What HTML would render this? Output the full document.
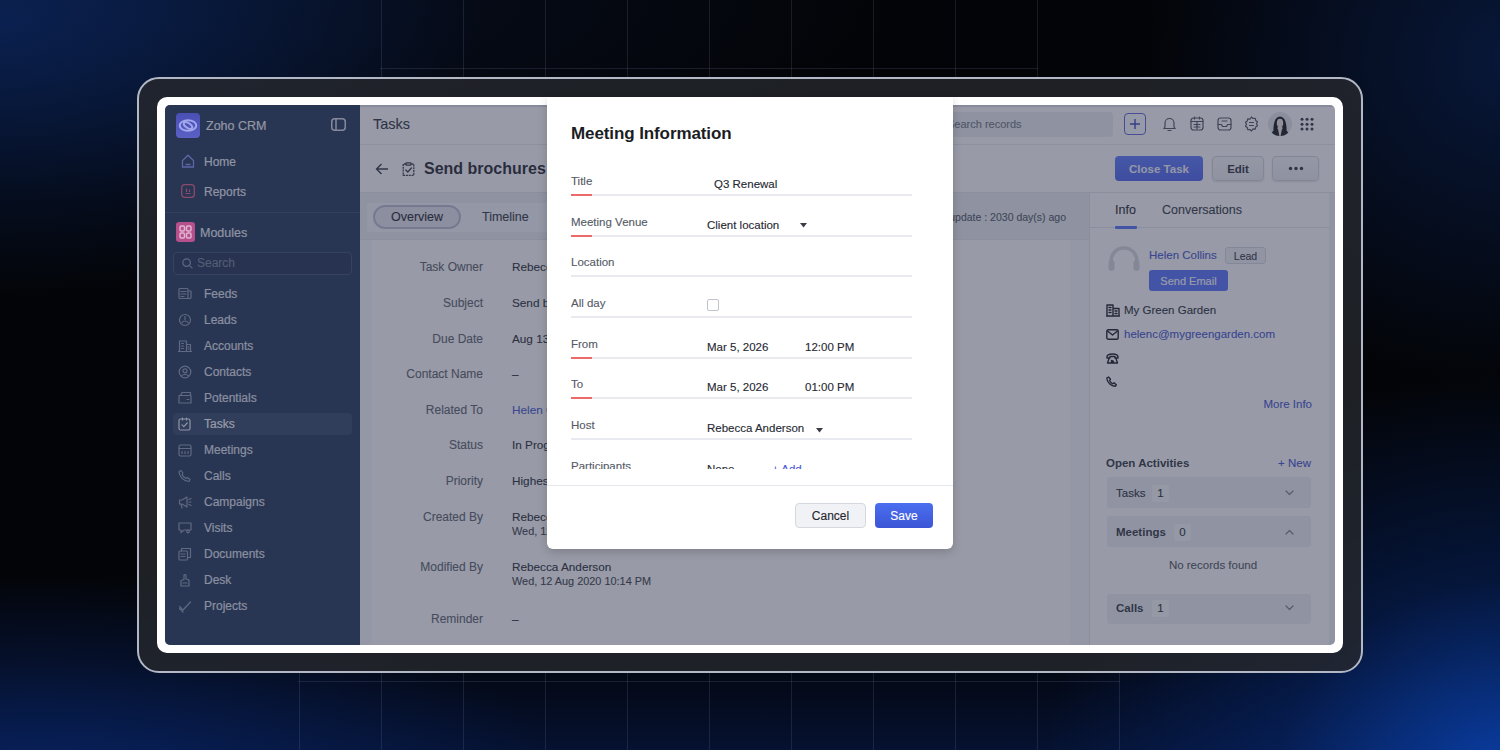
<!DOCTYPE html>
<html><head><meta charset="utf-8">
<style>
*{margin:0;padding:0;box-sizing:border-box}
html,body{width:1500px;height:750px;overflow:hidden}
body{position:relative;font-family:"Liberation Sans",sans-serif;background:#04060b;}
.a{position:absolute}
.t[style*="bold"]{-webkit-text-stroke:0}
.t{position:absolute;white-space:nowrap;line-height:16px;height:16px;-webkit-text-stroke:0.12px currentColor}
#bg{position:absolute;left:0;top:0;width:1500px;height:750px;
background:
radial-gradient(ellipse 470px 420px at 1510px 790px, rgba(10,66,175,0.95), rgba(8,48,135,0.4) 50%, rgba(0,0,0,0) 100%),
radial-gradient(ellipse 520px 220px at 40px 790px, rgba(10,45,125,0.6), rgba(0,0,0,0) 100%),
radial-gradient(ellipse 480px 280px at 0px 20px, rgba(12,42,105,0.65), rgba(0,0,0,0) 100%),
radial-gradient(ellipse 800px 200px at 100px 0px, rgba(12,30,70,0.45), rgba(0,0,0,0) 100%),
radial-gradient(ellipse 380px 330px at 1520px 60px, rgba(10,32,80,0.7), rgba(0,0,0,0) 100%),
linear-gradient(to top, rgba(6,22,62,0.75), rgba(4,12,35,0.3) 90px, rgba(0,0,0,0) 170px),
#030407;}
.vl{position:absolute;top:0;width:1px;height:750px;background:rgba(160,170,210,0.14)}
.hl{position:absolute;height:1px;background:rgba(160,170,210,0.14)}
#frame{position:absolute;left:137px;top:77px;width:1226px;height:596px;border:2px solid #b3b8c6;border-radius:22px;background:rgba(38,40,45,0.8)}
#white{position:absolute;left:157px;top:97px;width:1186px;height:556px;border-radius:10px;background:#fff}
#app{position:absolute;left:165px;top:105px;width:1170px;height:540px;border-radius:5px;overflow:hidden;background:#fff}
#overlay{position:absolute;left:165px;top:105px;width:1170px;height:540px;border-radius:5px;background:rgba(49,55,79,0.5)}
#modal{position:absolute;left:547px;top:97px;width:406px;height:452px;background:#fff;border-radius:0 0 6px 6px;overflow:hidden;box-shadow:0 3px 10px rgba(0,0,0,0.18)}
</style></head><body>
<div id="bg"></div>

<div class="vl" style="left:381px;top:0;height:80px"></div><div class="vl" style="left:463px;top:0;height:80px"></div><div class="vl" style="left:545px;top:0;height:80px"></div><div class="vl" style="left:627px;top:0;height:80px"></div><div class="vl" style="left:709px;top:0;height:80px"></div><div class="vl" style="left:791px;top:0;height:80px"></div><div class="vl" style="left:873px;top:0;height:80px"></div><div class="vl" style="left:955px;top:0;height:80px"></div><div class="vl" style="left:1037px;top:0;height:80px"></div><div class="vl" style="left:299px;top:670px;height:80px"></div><div class="vl" style="left:381px;top:670px;height:80px"></div><div class="vl" style="left:463px;top:670px;height:80px"></div><div class="vl" style="left:545px;top:670px;height:80px"></div><div class="vl" style="left:627px;top:670px;height:80px"></div><div class="vl" style="left:709px;top:670px;height:80px"></div><div class="vl" style="left:791px;top:670px;height:80px"></div><div class="vl" style="left:873px;top:670px;height:80px"></div><div class="vl" style="left:955px;top:670px;height:80px"></div><div class="vl" style="left:1037px;top:670px;height:80px"></div><div class="vl" style="left:1119px;top:670px;height:80px"></div>
<div class="hl" style="left:380px;width:658px;top:68px"></div>
<div class="hl" style="left:298px;width:822px;top:681px"></div>
<div id="frame"></div>
<div id="white"></div>
<div id="app">

<!-- SIDEBAR -->
<div class="a" style="left:0;top:0;width:195px;height:540px;background:#1f3356"></div>


<div class="t" style="left:41px;top:13px;font-size:12.5px;color:#f2f4fa">Zoho CRM</div>
<svg class="a" style="left:166px;top:13px" width="15" height="13" viewBox="0 0 15 13"><rect x="0.75" y="0.75" width="13.5" height="11.5" rx="3" fill="none" stroke="#d8dce8" stroke-width="1.5"/><line x1="5" y1="1" x2="5" y2="12" stroke="#d8dce8" stroke-width="1.5"/></svg>
<svg class="a" style="left:16px;top:49px" width="14" height="14" viewBox="0 0 14 14"><path d="M1.5 13V6.5L7 1.2l5.5 5.3V13z" fill="none" stroke="#8a93ff" stroke-width="1.3"/><path d="M4.5 10.5h5" stroke="#8a93ff" stroke-width="1.3"/></svg>
<div class="t" style="left:39px;top:49px;font-size:12px;color:#eef1f8">Home</div>
<svg class="a" style="left:16px;top:79px" width="14" height="14" viewBox="0 0 14 14"><rect x="0.7" y="0.7" width="12.6" height="12.6" rx="3" fill="none" stroke="#e75c8a" stroke-width="1.3"/><path d="M4.5 9.5h5M5.5 4.5v3.5M8.5 5.5v2.5" stroke="#e75c8a" stroke-width="1.2"/></svg>
<div class="t" style="left:39px;top:79px;font-size:12px;color:#eef1f8">Reports</div>
<div class="a" style="left:0;top:107px;width:195px;height:1px;background:#34476a"></div>


<div class="t" style="left:35px;top:120px;font-size:12.5px;color:#eef1f8">Modules</div>
<div class="a" style="left:8px;top:147px;width:179px;height:23px;border:1px solid #3a4d70;border-radius:4px;background:#1c2f50"></div>
<svg class="a" style="left:17px;top:153px" width="11" height="11" viewBox="0 0 11 11"><circle cx="4.6" cy="4.6" r="3.8" fill="none" stroke="#8996b4" stroke-width="1.2"/><path d="M7.4 7.4l3 3" stroke="#8996b4" stroke-width="1.2"/></svg>
<div class="t" style="left:32px;top:150px;font-size:12px;color:#74809c">Search</div>
<div class="a" style="left:8px;top:308px;width:179px;height:22px;border-radius:4px;background:#2e4468"></div>
<div class="t" style="left:39px;top:181px;font-size:12px;color:#e2e7f2">Feeds</div>
<div class="t" style="left:39px;top:207px;font-size:12px;color:#e2e7f2">Leads</div>
<div class="t" style="left:39px;top:233px;font-size:12px;color:#e2e7f2">Accounts</div>
<div class="t" style="left:39px;top:259px;font-size:12px;color:#e2e7f2">Contacts</div>
<div class="t" style="left:39px;top:285px;font-size:12px;color:#e2e7f2">Potentials</div>
<div class="t" style="left:39px;top:311px;font-size:12px;color:#ffffff">Tasks</div>
<div class="t" style="left:39px;top:337px;font-size:12px;color:#e2e7f2">Meetings</div>
<div class="t" style="left:39px;top:363px;font-size:12px;color:#e2e7f2">Calls</div>
<div class="t" style="left:39px;top:389px;font-size:12px;color:#e2e7f2">Campaigns</div>
<div class="t" style="left:39px;top:415px;font-size:12px;color:#e2e7f2">Visits</div>
<div class="t" style="left:39px;top:441px;font-size:12px;color:#e2e7f2">Documents</div>
<div class="t" style="left:39px;top:467px;font-size:12px;color:#e2e7f2">Desk</div>
<div class="t" style="left:39px;top:493px;font-size:12px;color:#e2e7f2">Projects</div>

<svg class="a" style="left:13px;top:182px" width="14" height="14" viewBox="0 0 14 14"><g fill="none" stroke="#8f9ab4" stroke-width="1.2" stroke-linecap="round" stroke-linejoin="round"><rect x="1" y="1.5" width="9" height="10" rx="1"/><path d="M10 4h3v6.5a1 1 0 0 1-1 1H2.5M3 4.5h5M3 7h5M3 9.5h3"/></g></svg>
<svg class="a" style="left:13px;top:208px" width="14" height="14" viewBox="0 0 14 14"><g fill="none" stroke="#8f9ab4" stroke-width="1.2" stroke-linecap="round" stroke-linejoin="round"><circle cx="7" cy="7" r="5.5"/><path d="M4 9.5c1-2 5-2 6 0M7 3.5v3"/></g></svg>
<svg class="a" style="left:13px;top:234px" width="14" height="14" viewBox="0 0 14 14"><g fill="none" stroke="#8f9ab4" stroke-width="1.2" stroke-linecap="round" stroke-linejoin="round"><path d="M1.5 12.5V2h7v10.5M8.5 5.5h4v7M0.5 12.5h13M3.5 4.5h2M3.5 7h2M3.5 9.5h2M10 8h1M10 10h1"/></g></svg>
<svg class="a" style="left:13px;top:260px" width="14" height="14" viewBox="0 0 14 14"><g fill="none" stroke="#8f9ab4" stroke-width="1.2" stroke-linecap="round" stroke-linejoin="round"><circle cx="7" cy="7" r="5.8"/><circle cx="7" cy="5.8" r="2"/><path d="M3.5 11c1-2 6-2 7 0"/></g></svg>
<svg class="a" style="left:13px;top:286px" width="14" height="14" viewBox="0 0 14 14"><g fill="none" stroke="#8f9ab4" stroke-width="1.2" stroke-linecap="round" stroke-linejoin="round"><path d="M1 4.5h12v7.5H1zM2.5 4.5L4 1.5h8.5v3M9 8.5h2"/></g></svg>
<svg class="a" style="left:13px;top:312px" width="14" height="14" viewBox="0 0 14 14"><g fill="none" stroke="#eef1f8" stroke-width="1.2" stroke-linecap="round" stroke-linejoin="round"><rect x="1" y="2" width="11" height="11" rx="1.5"/><path d="M4.5 1v2M8.5 1v2M4 7.8l1.8 1.8L9.2 6"/></g></svg>
<svg class="a" style="left:13px;top:338px" width="14" height="14" viewBox="0 0 14 14"><g fill="none" stroke="#8f9ab4" stroke-width="1.2" stroke-linecap="round" stroke-linejoin="round"><rect x="1" y="2" width="12" height="11" rx="1.5"/><path d="M1 5.5h12M4 8.5v2M7 8.5v2M10 8.5v2"/></g></svg>
<svg class="a" style="left:13px;top:364px" width="14" height="14" viewBox="0 0 14 14"><g fill="none" stroke="#8f9ab4" stroke-width="1.2" stroke-linecap="round" stroke-linejoin="round"><path d="M3 1.5l2 2.5-1 1.5c.8 1.8 2.2 3.2 4 4l1.5-1 2.5 2-1 2c-5 0-10-5-10-10z"/></g></svg>
<svg class="a" style="left:13px;top:390px" width="14" height="14" viewBox="0 0 14 14"><g fill="none" stroke="#8f9ab4" stroke-width="1.2" stroke-linecap="round" stroke-linejoin="round"><path d="M1.5 5v4h2.5l5 3V2L4 5zM3 9l1 4M11 4.5l2-1M11 9.5l2 1M11 7h2"/></g></svg>
<svg class="a" style="left:13px;top:416px" width="14" height="14" viewBox="0 0 14 14"><g fill="none" stroke="#8f9ab4" stroke-width="1.2" stroke-linecap="round" stroke-linejoin="round"><path d="M1 2h12v7H6l-3 2.5V9H1z"/><circle cx="10" cy="10.5" r="1.3"/></g></svg>
<svg class="a" style="left:13px;top:442px" width="14" height="14" viewBox="0 0 14 14"><g fill="none" stroke="#8f9ab4" stroke-width="1.2" stroke-linecap="round" stroke-linejoin="round"><rect x="1" y="4" width="8.5" height="9" rx="1"/><path d="M3.5 4V1.5h9v9H9.5M3 7h4M3 9.5h4"/></g></svg>
<svg class="a" style="left:13px;top:468px" width="14" height="14" viewBox="0 0 14 14"><g fill="none" stroke="#8f9ab4" stroke-width="1.2" stroke-linecap="round" stroke-linejoin="round"><path d="M3 13V7.5l3-1V2.5a1 1 0 0 1 2 0V6l3 1v6zM5 10h4"/></g></svg>
<svg class="a" style="left:13px;top:494px" width="14" height="14" viewBox="0 0 14 14"><g fill="none" stroke="#8f9ab4" stroke-width="1.2" stroke-linecap="round" stroke-linejoin="round"><path d="M1.5 7.5L5 11l7.5-8"/><path d="M1.5 9.5L5 13"/></g></svg>
<!-- MAIN -->
<div class="a" style="left:195px;top:0;width:975px;height:2px;background:#dcdde6"></div>
<div class="a" style="left:195px;top:39px;width:975px;height:1px;background:#e6e8ee"></div>
<div class="t" style="left:208px;top:11px;font-size:14.5px;color:#2b2f3a">Tasks</div>
<div class="a" style="left:770px;top:7px;width:178px;height:25px;border-radius:4px;background:#eceef3"></div>
<div class="t" style="left:782px;top:11px;font-size:11px;color:#6f7480">Search records</div>
<div class="a" style="left:959px;top:8px;width:22px;height:22px;border:1.5px solid #5a62d6;border-radius:4px;background:#fbfbff"></div>
<svg class="a" style="left:964px;top:13px" width="12" height="12" viewBox="0 0 12 12"><path d="M6 1v10M1 6h10" stroke="#3b44b8" stroke-width="1.4"/></svg>

<svg class="a" style="left:997px;top:11px" width="15" height="16" viewBox="0 0 15 16"><g fill="none" stroke="#4a4e5a" stroke-width="1.2" stroke-linecap="round" stroke-linejoin="round"><path d="M3 11V7a4.5 4.5 0 0 1 9 0v4l1.2 1.5H1.8z"/><path d="M6 14.5h3"/></g></svg>
<svg class="a" style="left:1025px;top:11px" width="14" height="15" viewBox="0 0 14 15"><g fill="none" stroke="#4a4e5a" stroke-width="1.2" stroke-linecap="round" stroke-linejoin="round"><rect x="1" y="2" width="12" height="12" rx="2.5"/><path d="M1 5.5h12M4.5 1v2M9.5 1v2M4 8.5h6M4 11h6M7 6v7"/></g></svg>
<svg class="a" style="left:1052px;top:12px" width="15" height="14" viewBox="0 0 15 14"><g fill="none" stroke="#4a4e5a" stroke-width="1.2" stroke-linecap="round" stroke-linejoin="round"><rect x="1" y="1" width="13" height="12" rx="2.5"/><path d="M1 7.5h3.5l1 2h4l1-2H14M5 4h5"/></g></svg>
<svg class="a" style="left:1079px;top:11px" width="15" height="16" viewBox="0 0 15 16"><g fill="none" stroke="#4a4e5a" stroke-width="1.2" stroke-linecap="round" stroke-linejoin="round"><path d="M7.5 1l1.6 1.5 2.2-.2.4 2.1 1.8 1.3-1 2 1 2-1.8 1.3-.4 2.1-2.2-.2L7.5 15l-1.6-1.5-2.2.2-.4-2.1L1.5 10.3l1-2-1-2 1.8-1.3.4-2.1 2.2.2z"/><path d="M5.5 6.5h4M5.5 9.5h4"/></g></svg>
<div class="a" style="left:1103px;top:7px;width:24px;height:24px;border-radius:50%;background:#e4e5ea;overflow:hidden"><svg width="24" height="24" viewBox="0 0 24 24"><path d="M5.5 21C5 13 6.5 4.5 12 4.5S19 13 18.5 21z" fill="#111216"/><ellipse cx="12" cy="11" rx="3.2" ry="4.3" fill="#f2e9e2"/><path d="M9.8 14.5h4.4l1.3 9.5h-7z" fill="#f2e9e2"/><path d="M2.5 24.5c1-5 3.5-7 7.5-7.5l1.5 7.5z" fill="#15161b"/><path d="M21.5 24.5c-1-5-3.5-7-7.5-7.5l-1.5 7.5z" fill="#15161b"/></svg></div>
<svg class="a" style="left:1135px;top:12px" width="14" height="14" viewBox="0 0 14 14"><g fill="#30343f"><circle cx="2" cy="2.3" r="1.5"/><circle cx="7" cy="2.3" r="1.5"/><circle cx="12" cy="2.3" r="1.5"/><circle cx="2" cy="7.2" r="1.5"/><circle cx="7" cy="7.2" r="1.5"/><circle cx="12" cy="7.2" r="1.5"/><circle cx="2" cy="12" r="1.5"/><circle cx="7" cy="12" r="1.5"/><circle cx="12" cy="12" r="1.5"/></g></svg>
<!-- title row -->
<div class="a" style="left:195px;top:87px;width:975px;height:1px;background:#e2e4ea"></div>
<svg class="a" style="left:210px;top:57px" width="14" height="14" viewBox="0 0 14 14"><path d="M13 7H1.5M6.5 2L1.5 7l5 5" fill="none" stroke="#30343f" stroke-width="1.4"/></svg>
<svg class="a" style="left:237px;top:57px" width="13" height="14" viewBox="0 0 13 14"><g fill="none" stroke="#30343f" stroke-width="1.3"><path d="M4 2H1.2v11.3h10.6V2H9" stroke-dasharray="2 0.8"/><rect x="4" y="0.8" width="5" height="2.4" rx="0.6"/><path d="M3.8 8l2 2 3.6-4" stroke-linecap="round"/></g></svg>
<div class="t" style="left:259px;top:54px;height:20px;line-height:20px;font-size:16px;font-weight:bold;color:#1f232d">Send brochures</div>
<div class="a" style="left:950px;top:51px;width:88px;height:25px;border-radius:4px;background:linear-gradient(#5d78ff,#4a62ee)"></div>
<div class="t" style="left:950px;top:56px;width:88px;text-align:center;font-size:11.5px;font-weight:bold;color:#f4f6ff">Close Task</div>
<div class="a" style="left:1047px;top:51px;width:52px;height:25px;border:1px solid #d2d5de;border-radius:4px;background:linear-gradient(#f7f8fa,#eceef2);box-shadow:0 1px 2px rgba(0,0,0,0.12)"></div>
<div class="t" style="left:1047px;top:56px;width:52px;text-align:center;font-size:11.5px;font-weight:bold;color:#2b2f3a">Edit</div>
<div class="a" style="left:1107px;top:51px;width:47px;height:25px;border:1px solid #d2d5de;border-radius:4px;background:linear-gradient(#f7f8fa,#eceef2);box-shadow:0 1px 2px rgba(0,0,0,0.12)"></div>
<svg class="a" style="left:1123px;top:61px" width="16" height="5" viewBox="0 0 16 5"><circle cx="2.5" cy="2.5" r="1.7" fill="#2b2f3a"/><circle cx="8" cy="2.5" r="1.7" fill="#2b2f3a"/><circle cx="13.5" cy="2.5" r="1.7" fill="#2b2f3a"/></svg>
<!-- tab row -->
<div class="a" style="left:195px;top:88px;width:729px;height:47px;background:#eceef3"></div>
<div class="a" style="left:202px;top:98px;width:560px;height:29px;background:#f6f7fa"></div>
<div class="a" style="left:195px;top:134px;width:729px;height:1px;background:#e3e5eb"></div>
<div class="a" style="left:208px;top:100px;width:88px;height:24px;border:2px solid #b9bdd0;border-radius:12px;background:#e4e6ee"></div>
<div class="t" style="left:208px;top:104px;width:88px;text-align:center;font-size:12.5px;color:#1f232d">Overview</div>
<div class="t" style="left:317px;top:104px;font-size:12.5px;color:#30343f">Timeline</div>
<div class="t" style="left:700px;top:104px;width:201px;text-align:right;font-size:10.5px;color:#50545f">Last update : 2030 day(s) ago</div>
<!-- content -->
<div class="a" style="left:195px;top:135px;width:729px;height:405px;background:#f6f7fa"></div>
<div class="a" style="left:207px;top:135px;width:698px;height:405px;background:#ffffff"></div>
<div class="t" style="left:200px;top:154px;width:118px;text-align:right;font-size:12px;color:#5b606c">Task Owner</div>
<div class="t" style="left:347px;top:154px;font-size:11.75px;color:#262a34">Rebecca Anderson</div>
<div class="t" style="left:200px;top:190px;width:118px;text-align:right;font-size:12px;color:#5b606c">Subject</div>
<div class="t" style="left:347px;top:190px;font-size:11.75px;color:#262a34">Send brochures</div>
<div class="t" style="left:200px;top:226px;width:118px;text-align:right;font-size:12px;color:#5b606c">Due Date</div>
<div class="t" style="left:347px;top:226px;font-size:11.75px;color:#262a34">Aug 13, 2020</div>
<div class="t" style="left:200px;top:261px;width:118px;text-align:right;font-size:12px;color:#5b606c">Contact Name</div>
<div class="t" style="left:347px;top:261px;font-size:11.75px;color:#262a34">–</div>
<div class="t" style="left:200px;top:297px;width:118px;text-align:right;font-size:12px;color:#5b606c">Related To</div>
<div class="t" style="left:347px;top:297px;font-size:11.75px;color:#4456d0">Helen Collins</div>
<div class="t" style="left:200px;top:332px;width:118px;text-align:right;font-size:12px;color:#5b606c">Status</div>
<div class="t" style="left:347px;top:332px;font-size:11.75px;color:#262a34">In Progress</div>
<div class="t" style="left:200px;top:368px;width:118px;text-align:right;font-size:12px;color:#5b606c">Priority</div>
<div class="t" style="left:347px;top:368px;font-size:11.75px;color:#262a34">Highest</div>
<div class="t" style="left:200px;top:404px;width:118px;text-align:right;font-size:12px;color:#5b606c">Created By</div>
<div class="t" style="left:347px;top:404px;font-size:11.75px;color:#262a34">Rebecca Anderson</div>
<div class="t" style="left:347px;top:418px;font-size:10.9px;color:#3a3e48">Wed, 12 Aug 2020 10:14 PM</div>
<div class="t" style="left:200px;top:454px;width:118px;text-align:right;font-size:12px;color:#5b606c">Modified By</div>
<div class="t" style="left:347px;top:454px;font-size:11.75px;color:#262a34">Rebecca Anderson</div>
<div class="t" style="left:347px;top:468px;font-size:10.9px;color:#3a3e48">Wed, 12 Aug 2020 10:14 PM</div>
<div class="t" style="left:200px;top:506px;width:118px;text-align:right;font-size:12px;color:#5b606c">Reminder</div>
<div class="t" style="left:347px;top:506px;font-size:11.75px;color:#262a34">–</div>

<!-- RIGHT PANEL -->
<div class="a" style="left:924px;top:88px;width:246px;height:452px;background:#ffffff;border-left:1px solid #e3e5eb"></div>
<div class="t" style="left:950px;top:97px;font-size:12.5px;color:#1f232d">Info</div>
<div class="t" style="left:997px;top:97px;font-size:12.5px;color:#30343f">Conversations</div>
<div class="a" style="left:925px;top:122px;width:245px;height:1px;background:#e3e5eb"></div>
<div class="a" style="left:950px;top:121px;width:22px;height:2.5px;background:#5570ff;border-radius:1px"></div>
<svg class="a" style="left:941px;top:139px" width="36" height="30" viewBox="0 0 36 30"><path d="M5 22V17a13 13 0 0 1 26 0v5" fill="none" stroke="#d6d7dc" stroke-width="3.5"/><rect x="2.5" y="16" width="6" height="11" rx="3" fill="#d6d7dc"/><rect x="27.5" y="16" width="6" height="11" rx="3" fill="#d6d7dc"/></svg>
<div class="t" style="left:984px;top:142px;font-size:11.5px;color:#3f52d0">Helen Collins</div>
<div class="a" style="left:1060px;top:142px;width:41px;height:17px;border:1px solid #d5d8e0;border-radius:3px;background:#f1f2f6"></div>
<div class="t" style="left:1060px;top:143px;width:41px;text-align:center;font-size:10.5px;color:#30343f">Lead</div>
<div class="a" style="left:984px;top:165px;width:79px;height:21px;border-radius:3px;background:#5570ff"></div>
<div class="t" style="left:984px;top:168px;width:79px;text-align:center;font-size:11px;color:#fff">Send Email</div>

<svg class="a" style="left:941px;top:199px" width="14" height="13" viewBox="0 0 14 13"><g fill="none" stroke="#15171d" stroke-width="1.4" stroke-linecap="round" stroke-linejoin="round"><path d="M1 12V1h6v11M7 4.5h6V12M0.5 12h13M3 3.5h2M3 6h2M3 8.5h2M9 7h2M9 9.5h2"/></g></svg>
<svg class="a" style="left:941px;top:224px" width="13" height="11" viewBox="0 0 13 11"><g fill="none" stroke="#15171d" stroke-width="1.4" stroke-linecap="round" stroke-linejoin="round"><rect x="0.8" y="0.8" width="11.4" height="9.4" rx="1.5"/><path d="M1.5 2l5 4 5-4"/></g></svg>
<svg class="a" style="left:941px;top:248px" width="13" height="11" viewBox="0 0 13 11"><g fill="none" stroke="#15171d" stroke-width="1.4" stroke-linecap="round" stroke-linejoin="round"><path d="M1 4c0-2 2.5-3 5.5-3S12 2 12 4v1H9V3.5H4V5H1zM3 5.5L1.5 10h10L10 5.5M5.5 7.5l2 1-2 1z"/></g></svg>
<svg class="a" style="left:941px;top:271px" width="12" height="11" viewBox="0 0 12 11"><g fill="none" stroke="#15171d" stroke-width="1.4" stroke-linecap="round" stroke-linejoin="round"><path d="M2.5 1l2 2.2-1 1.3c.7 1.5 1.8 2.6 3.3 3.3l1.3-1 2.2 2-1 1.5C5 10.3 1 6.5.8 2z"/></g></svg>
<div class="t" style="left:959px;top:197px;font-size:11.5px;color:#262a34">My Green Garden</div>
<div class="t" style="left:959px;top:221px;font-size:11.5px;color:#3f52d0">helenc@mygreengarden.com</div>
<div class="t" style="left:1047px;top:291px;width:100px;text-align:right;font-size:11.5px;color:#3f52d0">More Info</div>
<div class="t" style="left:941px;top:350px;font-size:11.5px;font-weight:bold;color:#30343e">Open Activities</div>
<div class="t" style="left:1046px;top:350px;width:100px;text-align:right;font-size:11.5px;color:#3f52d0">+ New</div>
<div class="a" style="left:942px;top:372px;width:204px;height:31px;border-radius:3px;background:#eef0f4"></div>
<div class="t" style="left:951px;top:380px;font-size:11.5px;color:#262a34">Tasks</div>
<div class="a" style="left:987px;top:380px;width:17px;height:17px;background:#f8f9fb;border-radius:2px"></div>
<div class="t" style="left:987px;top:380px;width:17px;text-align:center;font-size:11.5px;color:#262a34">1</div>
<div class="a" style="left:942px;top:411px;width:204px;height:31px;border-radius:3px;background:#eef0f4"></div>
<div class="t" style="left:951px;top:419px;font-size:11.5px;font-weight:bold;color:#30343e">Meetings</div>
<div class="a" style="left:1009px;top:419px;width:17px;height:17px;background:#f8f9fb;border-radius:2px"></div>
<div class="t" style="left:1009px;top:419px;width:17px;text-align:center;font-size:11.5px;color:#262a34">0</div>

<div class="a" style="left:1164px;top:88px;width:6px;height:452px;background:#eef0f4"></div>
<div class="t" style="left:946px;top:452px;width:204px;text-align:center;font-size:11.5px;color:#50545f">No records found</div>
<div class="a" style="left:942px;top:489px;width:204px;height:30px;border-radius:3px;background:#eef0f4"></div>
<div class="t" style="left:951px;top:495px;font-size:11.5px;font-weight:bold;color:#30343e">Calls</div>
<div class="a" style="left:987px;top:495px;width:17px;height:17px;background:#f8f9fb;border-radius:2px"></div>
<div class="t" style="left:987px;top:495px;width:17px;text-align:center;font-size:11.5px;color:#262a34">1</div>
<svg class="a" style="left:1120px;top:385px" width="9" height="6" viewBox="0 0 9 6"><path d="M1 1l3.5 3.5L8 1" fill="none" stroke="#7a7e8a" stroke-width="1.2" stroke-linecap="round" stroke-linejoin="round"/></svg>
<svg class="a" style="left:1120px;top:424px" width="9" height="6" viewBox="0 0 9 6"><path d="M1 5l3.5-3.5L8 5" fill="none" stroke="#7a7e8a" stroke-width="1.2" stroke-linecap="round" stroke-linejoin="round"/></svg>
<svg class="a" style="left:1120px;top:500px" width="9" height="6" viewBox="0 0 9 6"><path d="M1 1l3.5 3.5L8 1" fill="none" stroke="#7a7e8a" stroke-width="1.2" stroke-linecap="round" stroke-linejoin="round"/></svg>
</div>
<div id="overlay"></div>

<div class="a" style="left:176px;top:113px;width:24px;height:25px;border-radius:4px;background:linear-gradient(#4a4fb6,#5a60c4)"></div>
<svg class="a" style="left:178px;top:116px" width="20" height="18" viewBox="0 0 20 18"><g fill="none" stroke="#a4a9ec" stroke-width="2"><ellipse cx="10" cy="9.5" rx="8.3" ry="5.3"/><ellipse cx="10" cy="9.5" rx="4.8" ry="2.4" transform="rotate(35 10 9.5)"/></g></svg>
<div class="a" style="left:176px;top:222px;width:19px;height:20px;border-radius:3px;background:#b5508c"></div>
<svg class="a" style="left:179px;top:225px" width="13" height="14" viewBox="0 0 13 14"><g fill="none" stroke="#e2b4d2" stroke-width="1.5"><rect x="1" y="1" width="4.5" height="5" rx="1.2"/><rect x="7.5" y="1" width="4.5" height="5" rx="1.2"/><rect x="1" y="8" width="4.5" height="5" rx="1.2"/><rect x="7.5" y="8" width="4.5" height="5" rx="1.2"/></g></svg>
<div id="modal">

<div class="t" style="left:24px;top:27px;height:20px;line-height:20px;font-size:17px;font-weight:bold;color:#1b1d24;letter-spacing:-0.1px">Meeting Information</div>
<div class="a" style="left:0;top:0;width:406px;height:372px;overflow:hidden">
<div class="t" style="left:24px;top:76.0px;font-size:11.5px;color:#555a66">Title</div>
<div class="a" style="left:24px;top:97.2px;width:341px;height:1.5px;background:#e9eaef"></div>
<div class="a" style="left:24px;top:97.0px;width:21px;height:2px;background:#ec6a6a"></div>
<div class="t" style="left:167px;top:79.0px;font-size:11.5px;color:#262932">Q3 Renewal</div>
<div class="t" style="left:24px;top:117.0px;font-size:11.5px;color:#555a66">Meeting Venue</div>
<div class="a" style="left:24px;top:138.2px;width:341px;height:1.5px;background:#e9eaef"></div>
<div class="a" style="left:24px;top:138.0px;width:21px;height:2px;background:#ec6a6a"></div>
<div class="t" style="left:160px;top:120.0px;font-size:11.5px;color:#262932">Client location</div>
<svg class="a" style="left:253px;top:125.5px" width="7" height="5" viewBox="0 0 7 5"><path d="M0 0h7L3.5 4.5z" fill="#3a3d46"/></svg>
<div class="t" style="left:24px;top:157.0px;font-size:11.5px;color:#555a66">Location</div>
<div class="a" style="left:24px;top:178.2px;width:341px;height:1.5px;background:#e9eaef"></div>
<div class="t" style="left:24px;top:198.0px;font-size:11.5px;color:#555a66">All day</div>
<div class="a" style="left:24px;top:219.2px;width:341px;height:1.5px;background:#e9eaef"></div>
<div class="a" style="left:160px;top:202px;width:12px;height:12px;border:1px solid #c2c4cc;border-radius:2px"></div>
<div class="t" style="left:24px;top:239.0px;font-size:11.5px;color:#555a66">From</div>
<div class="a" style="left:24px;top:260.2px;width:341px;height:1.5px;background:#e9eaef"></div>
<div class="a" style="left:24px;top:260.0px;width:21px;height:2px;background:#ec6a6a"></div>
<div class="t" style="left:160px;top:242.0px;font-size:11.5px;color:#262932">Mar 5, 2026</div>
<div class="t" style="left:258px;top:242.0px;font-size:11.5px;color:#262932">12:00 PM</div>
<div class="t" style="left:24px;top:279.0px;font-size:11.5px;color:#555a66">To</div>
<div class="a" style="left:24px;top:300.2px;width:341px;height:1.5px;background:#e9eaef"></div>
<div class="a" style="left:24px;top:300.0px;width:21px;height:2px;background:#ec6a6a"></div>
<div class="t" style="left:160px;top:282.0px;font-size:11.5px;color:#262932">Mar 5, 2026</div>
<div class="t" style="left:258px;top:282.0px;font-size:11.5px;color:#262932">01:00 PM</div>
<div class="t" style="left:24px;top:320.0px;font-size:11.5px;color:#555a66">Host</div>
<div class="a" style="left:24px;top:341.2px;width:341px;height:1.5px;background:#e9eaef"></div>
<div class="t" style="left:160px;top:323.0px;font-size:11.5px;color:#262932">Rebecca Anderson</div>
<svg class="a" style="left:269px;top:330.5px" width="7" height="5" viewBox="0 0 7 5"><path d="M0 0h7L3.5 4.5z" fill="#3a3d46"/></svg>
<div class="t" style="left:24px;top:360.5px;font-size:11.5px;color:#555a66">Participants</div>
<div class="a" style="left:24px;top:381.8px;width:341px;height:1.5px;background:#e9eaef"></div>
<div class="t" style="left:160px;top:363.5px;font-size:11.5px;color:#262932">None</div>
<div class="t" style="left:225px;top:363.5px;font-size:11.5px;color:#4a55d8">+ Add</div>
</div>
<div class="a" style="left:0;top:388px;width:406px;height:1px;background:#e6e7ec"></div>
<div class="a" style="left:248px;top:406px;width:71px;height:25px;border:1px solid #d6d8df;border-radius:4px;background:#f1f2f5"></div>
<div class="t" style="left:248px;top:411px;width:71px;text-align:center;font-size:12px;color:#24262d">Cancel</div>
<div class="a" style="left:328px;top:406px;width:58px;height:25px;border-radius:4px;background:linear-gradient(#4a6ff0,#3b55d6)"></div>
<div class="t" style="left:328px;top:411px;width:58px;text-align:center;font-size:12px;color:#fff">Save</div>
</div>
</body></html>
